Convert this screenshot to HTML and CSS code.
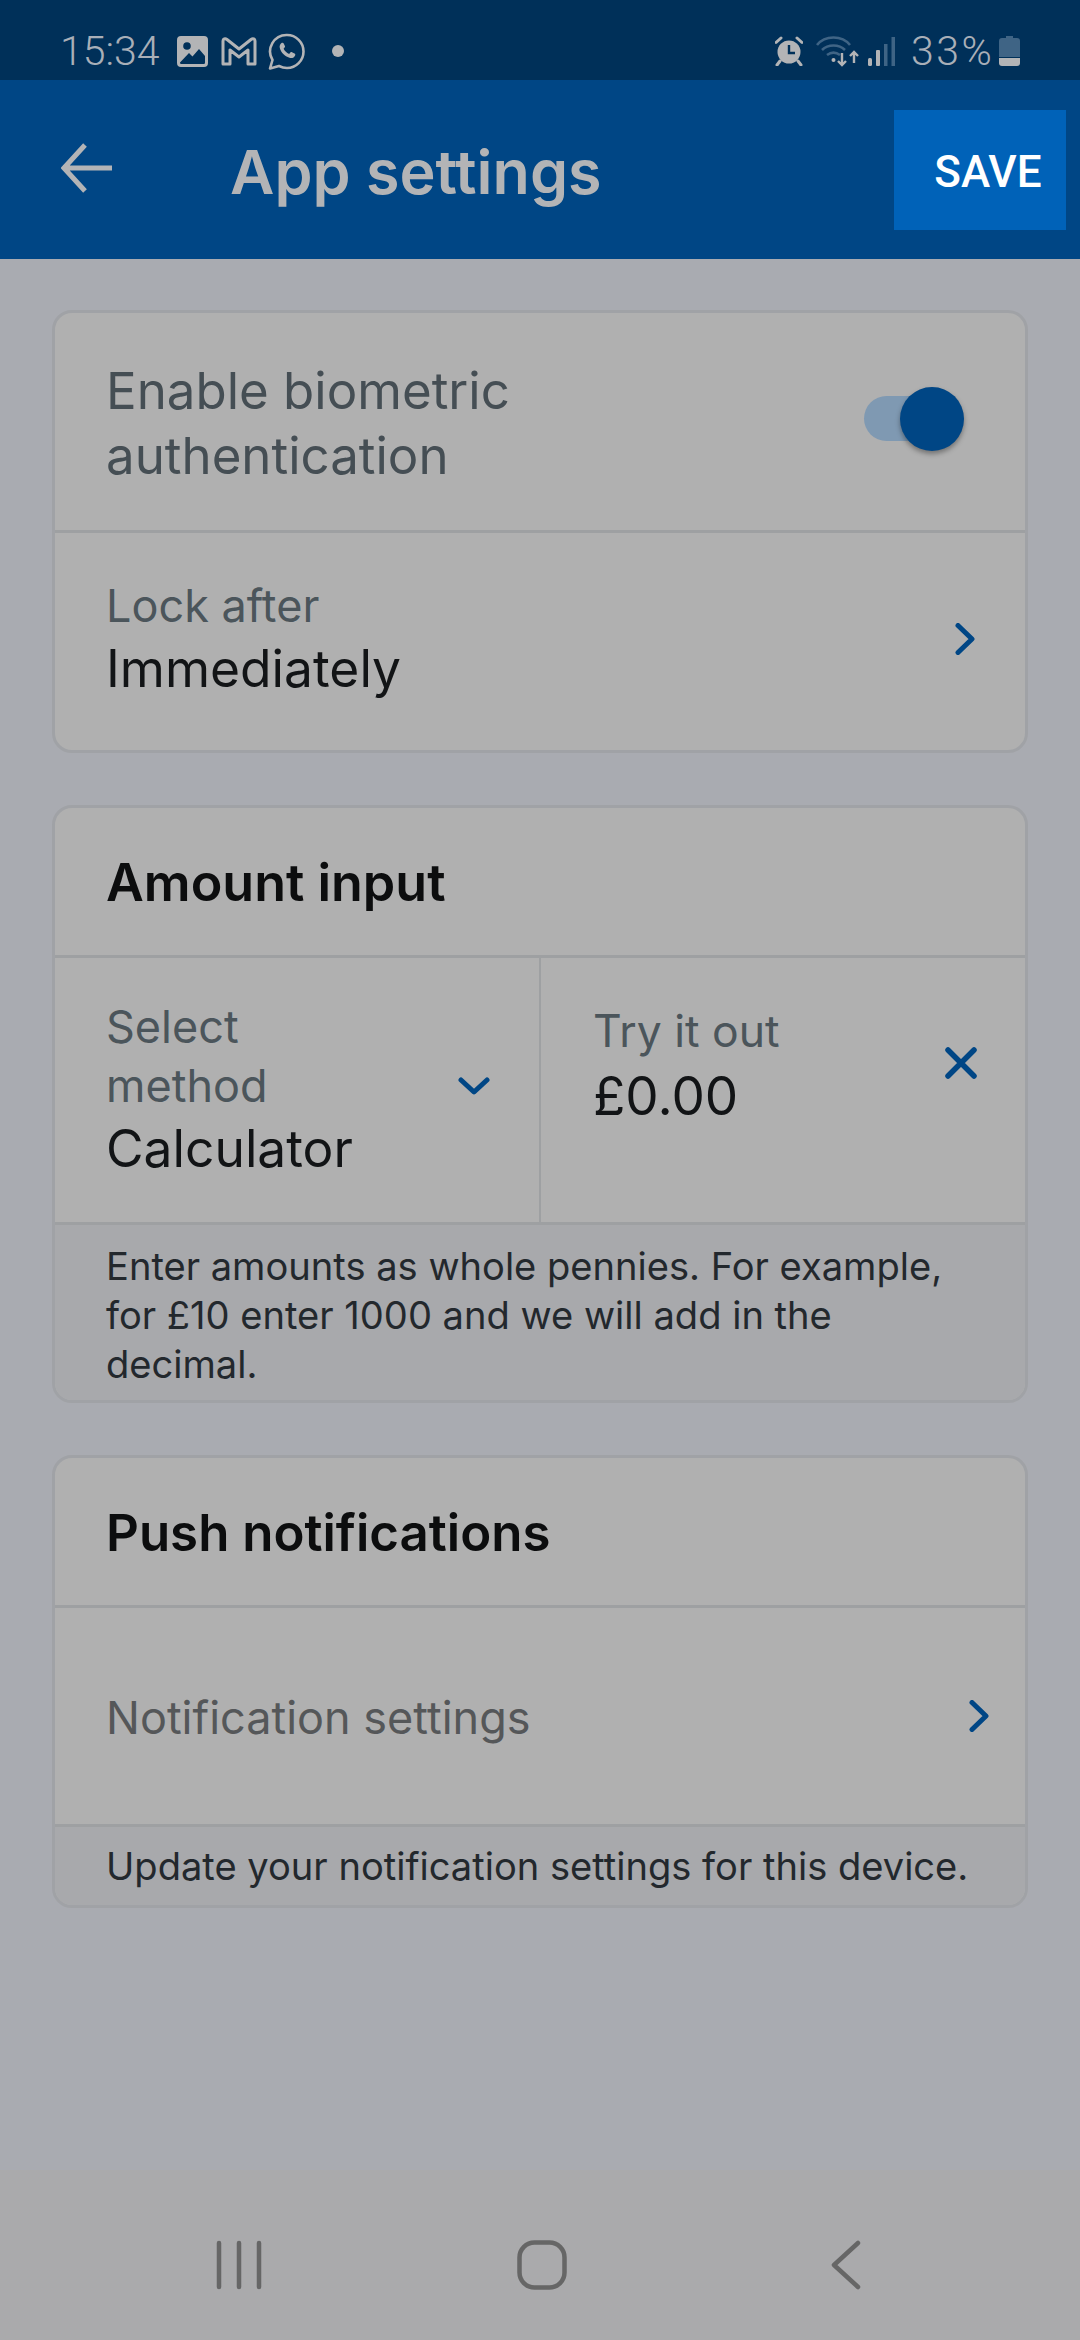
FILE: index.html
```html
<!DOCTYPE html>
<html lang="en">
<head>
<meta charset="utf-8">
<title>App settings</title>
<link rel="stylesheet" href="styles.css">
</head>
<body>
<div class="phone">
  <div class="status">
    <div class="status-left">
      <span class="clock">15:34</span>
      <svg class="i-img" viewBox="0 0 31 31"><path fill="#b3b4b6" fill-rule="evenodd" d="M4 0h23a4 4 0 0 1 4 4v23a4 4 0 0 1-4 4H4a4 4 0 0 1-4-4V4a4 4 0 0 1 4-4zM3 26.500c0 1 .7 1.600 1.600 1.600h21.800c1 0 1.600-.6 1.600-1.600V20l-6-7-6.500 7.500-3.500-3.500z"/><circle cx="10" cy="10" r="3.800" fill="#003059"/></svg>
      <svg class="i-m" viewBox="0 0 36 29"><path fill="none" stroke="#b3b4b6" stroke-width="3" stroke-linejoin="round" d="M2 4c0-2 2-3 4-1.500L18 12 30 2.500C32 1 34 2 34 4v23h-7V13l-9 7-9-7v14H2z"/></svg>
      <svg class="i-wa" viewBox="0 0 37 37"><path fill="none" stroke="#b3b4b6" stroke-width="2.600" stroke-linejoin="round" d="M19 2a16.500 16.500 0 0 1 0 33c-3 0-5.500-.7-8-2l-9 2.500 2.500-8.500A16.500 16.500 0 0 1 19 2z"/><path fill="#b3b4b6" d="M13.500 10c1-.6 1.800-.3 2.200.5l1.200 2.500c.3.700 0 1.200-.5 1.800l-.8 1c1.300 2.500 3 4 5.500 5.200l1.300-1.500c.5-.5 1-.6 1.600-.3l2.500 1.200c.8.400 1 1 .6 2-.7 2-3 3-5 2.500-5-1.200-9-5-10.300-9.800-.5-2 .2-4 1.700-5.100z"/></svg>
      <span class="dot"></span>
    </div>
    <div class="status-right">
      <svg class="i-alarm" viewBox="0 0 28 30"><circle cx="14" cy="16" r="11.500" fill="#b3b4b6"/><path d="M14 9v8h6" fill="none" stroke="#003059" stroke-width="2.400"/><path d="M1 6.500 6 2M27 6.500 22 2M5 25l-3 4M23 25l3 4" fill="none" stroke="#b3b4b6" stroke-width="3" stroke-linecap="round"/></svg>
      <svg class="i-wifi" viewBox="0 0 44 32"><g fill="none" stroke="#3f6485" stroke-width="2.600"><path d="M1 10C9 0 26 0 34 10"/><path d="M6 15c6-6 17-6 23 0"/><path d="M11 20c4-3 9-3 13 0"/></g><circle cx="17.500" cy="25" r="2" fill="#b3b4b6"/><path d="M26 18v12m-4-4 4 4 4-4M38 28V17m-4 4 4-4 4 4" fill="none" stroke="#b3b4b6" stroke-width="2.400"/></svg>
      <svg class="i-signal" viewBox="0 0 27 29"><rect x="0" y="21" width="4" height="8" rx="1.500" fill="#b3b4b6"/><rect x="8" y="13" width="4" height="16" rx="1" fill="#b3b4b6"/><rect x="16" y="7" width="3.500" height="22" fill="#3f6485"/><rect x="23.500" y="0" width="3.500" height="29" fill="#3f6485"/></svg>
      <span class="pct">33%</span>
      <svg class="i-batt" viewBox="0 0 21 30"><path fill="#3f6485" d="M7 0h7v2h4a3 3 0 0 1 3 3v16H0V5a3 3 0 0 1 3-3h4z"/><path fill="#b3b4b6" d="M0 22h21v5a3 3 0 0 1-3 3H3a3 3 0 0 1-3-3z"/></svg>
    </div>
  </div>

  <header class="appbar">
    <svg class="back" viewBox="0 0 52 52"><path d="M51 26H4M24 3 3 26l21 23" fill="none" stroke="#b3b4b6" stroke-width="5"/></svg>
    <h1 class="title">App settings</h1>
    <button class="save">SAVE</button>
  </header>

  <main class="content">
    <section class="card">
      <div class="row row-bio">
        <div class="label label-lg">Enable biometric<br>authentication</div>
        <div class="switch"><span class="track"></span><span class="thumb"></span></div>
      </div>
      <div class="row row-lock">
        <div>
          <div class="label">Lock after</div>
          <div class="value">Immediately</div>
        </div>
        <svg class="chev" viewBox="0 0 20 32"><path d="M3 2.500 17 16 3 29.500" fill="none" stroke="#004685" stroke-width="5" stroke-linecap="round" stroke-linejoin="round"/></svg>
      </div>
    </section>

    <section class="card">
      <h2 class="card-title title-amount">Amount input</h2>
      <div class="split">
        <div class="cell cell-select">
          <div>
            <div class="label">Select<br>method</div>
            <div class="value">Calculator</div>
          </div>
          <svg class="chev-down" viewBox="0 0 32 18"><path d="M3 3l13 12L29 3" fill="none" stroke="#004685" stroke-width="5" stroke-linecap="round" stroke-linejoin="round"/></svg>
        </div>
        <div class="cell cell-try">
          <div>
            <div class="label label-try">Try it out</div>
            <div class="value value-amount">£0.00</div>
          </div>
          <svg class="close" viewBox="0 0 32 32"><path d="M3 3l26 26M29 3 3 29" fill="none" stroke="#004685" stroke-width="5.500" stroke-linecap="round"/></svg>
        </div>
      </div>
      <p class="note note-amount">Enter amounts as whole pennies. For example, for £10 enter 1000 and we will add in the decimal.</p>
    </section>

    <section class="card">
      <h2 class="card-title title-push">Push notifications</h2>
      <div class="row row-notif">
        <div class="label label-notif">Notification settings</div>
        <svg class="chev" viewBox="0 0 20 32"><path d="M3 2.500 17 16 3 29.500" fill="none" stroke="#004685" stroke-width="5" stroke-linecap="round" stroke-linejoin="round"/></svg>
      </div>
      <p class="note note-push">Update your notification settings for this device.</p>
    </section>
  </main>

  <nav class="navbar">
    <svg class="nav-recent" viewBox="0 0 48 50"><path d="M4 3v44M24 3v44M44 3v44" fill="none" stroke="#666" stroke-width="4.500" stroke-linecap="round"/></svg>
    <svg class="nav-home" viewBox="0 0 50 50"><rect x="2.500" y="2.500" width="45" height="45" rx="15" fill="none" stroke="#666" stroke-width="4.500"/></svg>
    <svg class="nav-back" viewBox="0 0 32 50"><path d="M28 3 4 25l24 22" fill="none" stroke="#666" stroke-width="4.500" stroke-linecap="round" stroke-linejoin="round"/></svg>
  </nav>
</div>
</body>
</html>
```
FILE: styles.css
```css
* { box-sizing: border-box; }
html, body { margin: 0; padding: 0; }
body { width: 1080px; height: 2340px; overflow: hidden; font-family: "Inter", "Noto Sans", sans-serif; }
.phone { width: 1080px; height: 2340px; display: flex; flex-direction: column; background: #a9abb1; }

.status { height: 80px; flex: none; background: #003059; display: flex; justify-content: space-between; align-items: center; padding: 22px 60px 0 60px; color: #a9afb8; font-family: "Roboto", sans-serif; font-weight: 300; font-size: 41px; }
.status-left, .status-right { display: flex; align-items: center; }
.clock { width: 117px; }
.i-img { width: 31px; height: 31px; }
.i-m { width: 36px; height: 29px; margin-left: 13px; }
.i-wa { width: 37px; height: 37px; margin-left: 11px; }
.dot { width: 12px; height: 12px; border-radius: 50%; background: #b3b4b6; margin-left: 27px; }
.i-alarm { width: 28px; height: 30px; }
.i-wifi { width: 44px; height: 32px; margin-left: 13px; }
.i-signal { width: 27px; height: 29px; margin-left: 8px; }
.pct { margin-left: 16px; width: 82px; letter-spacing: 2.500px; white-space: nowrap; }
.i-batt { width: 21px; height: 30px; margin-left: 6px; }

.appbar { height: 179px; flex: none; background: #004685; display: flex; align-items: center; padding: 0 14px 0 61px; }
.back { width: 52px; height: 52px; flex: none; margin-top: -3px; }
.title { margin: 6px 0 0 117px; flex: 1; font-size: 61px; font-weight: 600; color: #b3b4b6; line-height: 1; }
.save { width: 172px; height: 120px; border: 0; padding: 4px 0 0 16px; background: #0062b8; color: #fff; font-family: "Roboto", sans-serif; font-weight: 500; font-size: 44px; }

.content { flex: 1; padding: 51px 52px 0; display: flex; flex-direction: column; gap: 52px; }
.card { border: 3px solid #a0a2a6; border-radius: 20px; background: #b0b0b0; overflow: hidden; }
.row { display: flex; justify-content: space-between; align-items: center; padding: 0 51px; }
.row-bio { border-bottom: 3px solid #9ea0a2; align-items: flex-start; padding-top: 45px; height: 220px; }
.row-lock { height: 217px; padding-right: 50px; padding-bottom: 5px; }
.row-notif { height: 216px; padding-right: 36px; }

.label { font-size: 45px; line-height: 59px; color: #4b555b; font-weight: 400; }
.label-lg { font-size: 51px; line-height: 65px; color: #454e54; }
.label-notif { color: #555759; padding-top: 2px; }
.label-try { font-size: 44.500px; }
.value { font-size: 51.500px; line-height: 67px; color: #121416; }
.value-amount { font-size: 53px; padding-top: 2px; }

.switch { position: relative; width: 100px; height: 64px; margin: 29px 10px 0 0; flex: none; }
.track { position: absolute; left: 0; top: 9px; width: 86px; height: 45px; border-radius: 23px; background: #7f99b2; }
.thumb { position: absolute; left: 36px; top: 0; width: 64px; height: 64px; border-radius: 50%; background: #004685; box-shadow: 0 3px 5px rgba(0,0,0,.35); }

.chev { width: 20px; height: 32px; flex: none; }
.card-title { margin: 0; height: 150px; padding: 42px 51px 0; line-height: 65px; font-weight: 600; color: #0c0d0e; border-bottom: 3px solid #9ea0a2; }
.title-amount { font-size: 52px; }
.title-push { font-size: 51px; }

.split { display: flex; height: 267px; border-bottom: 3px solid #9ea0a2; }
.cell { display: flex; justify-content: space-between; }
.cell-select { width: 486px; border-right: 2px solid #9ea0a2; padding: 39px 49px 0 51px; }
.cell-try { flex: 1; padding: 44px 48px 0 52px; }
.chev-down { width: 32px; height: 18px; margin-top: 80px; flex: none; }
.close { width: 32px; height: 32px; margin-top: 45px; flex: none; }

.note { margin: 0; background: #a8a9ac; padding: 17px 51px 0; font-size: 38.100px; line-height: 49px; color: #23282d; }
.note-amount { height: 175px; }
.note-push { height: 81px; padding-top: 15px; border-top: 3px solid #9ea0a2; }

.navbar { height: 170px; flex: none; background: #aaaaac; display: flex; align-items: flex-start; padding: 70px 0 0 215px; }
.nav-recent { width: 48px; height: 50px; }
.nav-home { width: 50px; height: 50px; margin-left: 254px; }
.nav-back { width: 32px; height: 50px; margin-left: 263px; }
```
